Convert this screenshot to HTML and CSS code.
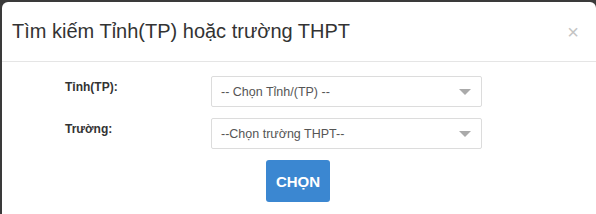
FILE: index.html
```html
<!DOCTYPE html>
<html lang="vi">
<head>
    <meta charset="UTF-8">
    <title>Tìm kiếm Tỉnh(TP) hoặc trường THPT</title>
    <link rel="stylesheet" href="styles.css">
</head>
<body>
    <div class="modal">
        <div class="modal-header">
            <h4 class="modal-title">Tìm kiếm Tỉnh(TP) hoặc trường THPT</h4>
            <span class="close">&times;</span>
        </div>
        <div class="modal-body">
            <div class="form-row">
                <label class="form-label">Tỉnh(TP):</label>
                <div class="select-box">
                    <span>-- Chọn Tỉnh/(TP) --</span>
                    <span class="caret"></span>
                </div>
            </div>
            <div class="form-row">
                <label class="form-label">Trường:</label>
                <div class="select-box">
                    <span>--Chọn trường THPT--</span>
                    <span class="caret"></span>
                </div>
            </div>
            <div class="actions">
                <button class="btn-choose">CHỌN</button>
            </div>
        </div>
    </div>
</body>
</html>
```

FILE: styles.css
```css
body {
    margin: 0;
    background: #3a3a3a;
    font-family: 'Liberation Sans', Arial, sans-serif;
    height: 214px;
    overflow: hidden;
}

.modal {
    margin: 2px 0 0 2px;
    background: #fff;
    border-radius: 6px 6px 0 0;
    height: 220px;
}

.modal-header {
    display: flex;
    align-items: center;
    justify-content: space-between;
    height: 59px;
    padding: 0 17px 0 10px;
    border-bottom: 1px solid #e5e5e5;
}

.modal-title {
    margin: 0;
    font-size: 20px;
    font-weight: normal;
    color: #333;
}

.close {
    font-size: 20px;
    color: #c4c4c4;
    line-height: 1;
}

.modal-body {
    padding: 14px 0 0 63px;
}

.form-row {
    display: flex;
    margin-bottom: 11px;
}

.form-label {
    width: 146px;
    padding-top: 4px;
    font-size: 12px;
    font-weight: bold;
    color: #333;
}

.select-box {
    display: flex;
    align-items: center;
    justify-content: space-between;
    box-sizing: border-box;
    width: 271px;
    height: 31px;
    padding: 0 10px 0 9px;
    border: 1px solid #dcdcdc;
    border-radius: 2px;
    font-size: 12.5px;
    color: #555;
}

.caret {
    width: 0;
    height: 0;
    border-left: 6px solid transparent;
    border-right: 6px solid transparent;
    border-top: 6px solid #aaa;
}

.actions {
    padding-left: 201px;
}

.btn-choose {
    width: 64px;
    height: 42px;
    border: none;
    border-radius: 3px;
    background: #3b87d1;
    color: #fff;
    font-family: 'Liberation Sans', Arial, sans-serif;
    font-size: 15px;
    font-weight: bold;
}
```
